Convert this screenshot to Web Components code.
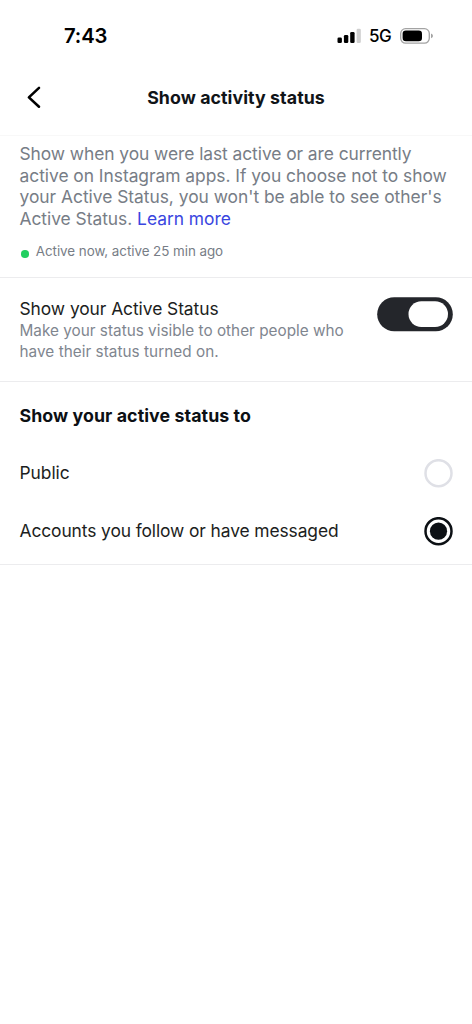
<!DOCTYPE html>
<html lang="en">
<head>
<meta charset="utf-8">
<title>Show activity status</title>
<style>
body{margin:0;background:#fff;font-family:Inter,Roboto,sans-serif;color:#1c1e21}
</style>
</head>
<body>
<activity-screen></activity-screen>
<script>
const define=(name,html,after)=>customElements.define(name,class extends HTMLElement{
  connectedCallback(){
    if(this.shadowRoot)return;
    const t=document.createElement('template');
    t.innerHTML=html;
    this.attachShadow({mode:'open'}).append(t.content.cloneNode(true));
    if(after)after(this);
  }
});

define('status-bar',`<style>
:host{display:flex;height:60px;box-sizing:border-box;padding:24px 38.5px 0 64px;justify-content:space-between;align-items:flex-start;color:#000}
time{font-size:20.3px;line-height:24px;font-weight:600;letter-spacing:-.15px}
.right{display:flex;align-items:center;height:24px}
.net{font-size:17px;font-weight:500;line-height:24px;margin:0 8px 0 7.5px;letter-spacing:-.3px}
svg{display:block;margin-top:-1px}
</style>
<time>7:43</time>
<div class="right">
<svg width="24" height="16" viewBox="0 0 24 16"><rect x="0.5" y="9.5" width="4.4" height="5.6" rx="1.3"/><rect x="6.9" y="6.9" width="4.4" height="8.2" rx="1.3"/><rect x="13.2" y="3.9" width="4.4" height="11.2" rx="1.3"/><rect x="19.6" y="0.7" width="4.2" height="14.4" rx="1.3" fill="#cfcfcf"/></svg>
<span class="net">5G</span>
<svg width="34" height="16" viewBox="0 0 34 16"><rect x=".7" y=".7" width="28.6" height="14.4" rx="4.8" fill="none" stroke="#a3a3a3" stroke-width="1.3"/><rect x="2.6" y="2.5" width="19.4" height="10.8" rx="3.3"/><path d="M31 5.6Q33 6.4 33 7.9T31 10.2Z" fill="#a3a3a3"/></svg>
</div>`);

define('nav-header',`<style>
:host{display:grid;grid-template-columns:60px 1fr 60px;align-items:center;height:76px;box-sizing:border-box;border-bottom:1px solid #f8f8f8}
svg{display:block;margin:-2px 0 0 26px}
h1{margin:0;text-align:center;font-size:17.8px;line-height:24px;font-weight:700;color:#101418;white-space:nowrap}
</style>
<svg width="16" height="24" viewBox="0 0 16 24"><path d="M13 2.9 2.9 12.4 13 21.7" fill="none" stroke="#000" stroke-width="2.6" stroke-linecap="round" stroke-linejoin="round"/></svg>
<h1><slot></slot></h1>`);

define('text-line',`<style>:host{display:block;white-space:nowrap}</style><slot></slot>`,el=>{
  if(el.hasAttribute('track'))el.style.letterSpacing=el.getAttribute('track')+'px';
});

define('status-intro',`<style>
:host{display:block;height:142px;box-sizing:border-box;padding:7.3px 19.5px 0;border-bottom:1px solid #ececee}
.copy{font-size:17.4px;line-height:21.5px;color:#777d86}
.hint{display:flex;align-items:center;margin-top:12.2px;font-size:13.4px;line-height:20px;color:#777d86}
i{width:7.5px;height:7.5px;border-radius:50%;background:#22cf60;margin:5px 7px 0 1.8px}
</style>
<div class="copy"><slot></slot></div>
<div class="hint"><i></i><slot name="hint"></slot></div>`);

define('learn-link',`<style>a{color:#3a46e0;text-decoration:none}</style><a><slot></slot></a>`);

define('toggle-switch',`<style>
:host{display:block;width:76px;height:35px}
svg{display:block}
</style><svg width="76" height="35" viewBox="0 0 76 35"><rect x=".2" y=".2" width="75.6" height="34" rx="17" fill="#24262b"/><rect x="31.5" y="4.2" width="39.5" height="25.8" rx="12.9" fill="#fff"/></svg>`);

define('toggle-row',`<style>
:host{display:flex;justify-content:space-between;align-items:flex-start;height:103.5px;box-sizing:border-box;padding:19px 19px 0 19.5px;border-bottom:1px solid #ececee}
.label{font-size:17.4px;line-height:22px;padding-top:1px}
.sub{font-size:15.3px;line-height:21.3px;color:#7f868f}
</style>
<div><div class="label"><slot name="label"></slot></div><div class="sub"><slot></slot></div></div>
<toggle-switch></toggle-switch>`);

define('radio-row',`<style>
:host{display:flex;justify-content:space-between;align-items:center;height:58px;padding:0 19px 0 19.5px;font-size:17.4px;line-height:24px}
svg{display:block;fill:none;stroke:#dfe0e6;stroke-width:2.5}
.mark{display:none;fill:#0c1014;stroke:none}
:host([checked]) svg{stroke:#0c1014}
:host([checked]) .mark{display:block}
</style><slot></slot><svg width="29" height="29" viewBox="0 0 29 29"><circle cx="14.5" cy="14.2" r="13"/><circle class="mark" cx="14.5" cy="14.2" r="8.6"/></svg>`);

define('audience-group',`<style>
:host{display:block;height:183.5px;box-sizing:border-box;border-bottom:1px solid #ececee}
h2{margin:0;padding:22px 19.5px 7px;font-size:17.8px;line-height:24px;height:62.5px;box-sizing:border-box;font-weight:700;color:#0c1014}
</style><h2><slot name="title"></slot></h2><slot></slot>`);

define('activity-screen',`<style>:host{display:block;width:472px;height:1024px;overflow:hidden}</style>
<status-bar></status-bar>
<nav-header><text-line track="0.06">Show activity status</text-line></nav-header>
<status-intro>
<text-line track="-0.065">Show when you were last active or are currently</text-line>
<text-line track="-0.03">active on Instagram apps. If you choose not to show</text-line>
<text-line track="-0.02">your Active Status, you won't be able to see other's</text-line>
<text-line track="-0.03">Active Status. <learn-link>Learn more</learn-link></text-line>
<text-line slot="hint" track="-0.05">Active now, active 25 min ago</text-line>
</status-intro>
<toggle-row>
<text-line slot="label" track="-0.06">Show your Active Status</text-line>
<text-line track="0.01">Make your status visible to other people who</text-line>
<text-line track="0.04">have their status turned on.</text-line>
</toggle-row>
<audience-group>
<text-line slot="title" track="0.07">Show your active status to</text-line>
<radio-row><text-line track="-0.05">Public</text-line></radio-row>
<radio-row checked><text-line track="-0.1">Accounts you follow or have messaged</text-line></radio-row>
</audience-group>`);
</script>
</body>
</html>
